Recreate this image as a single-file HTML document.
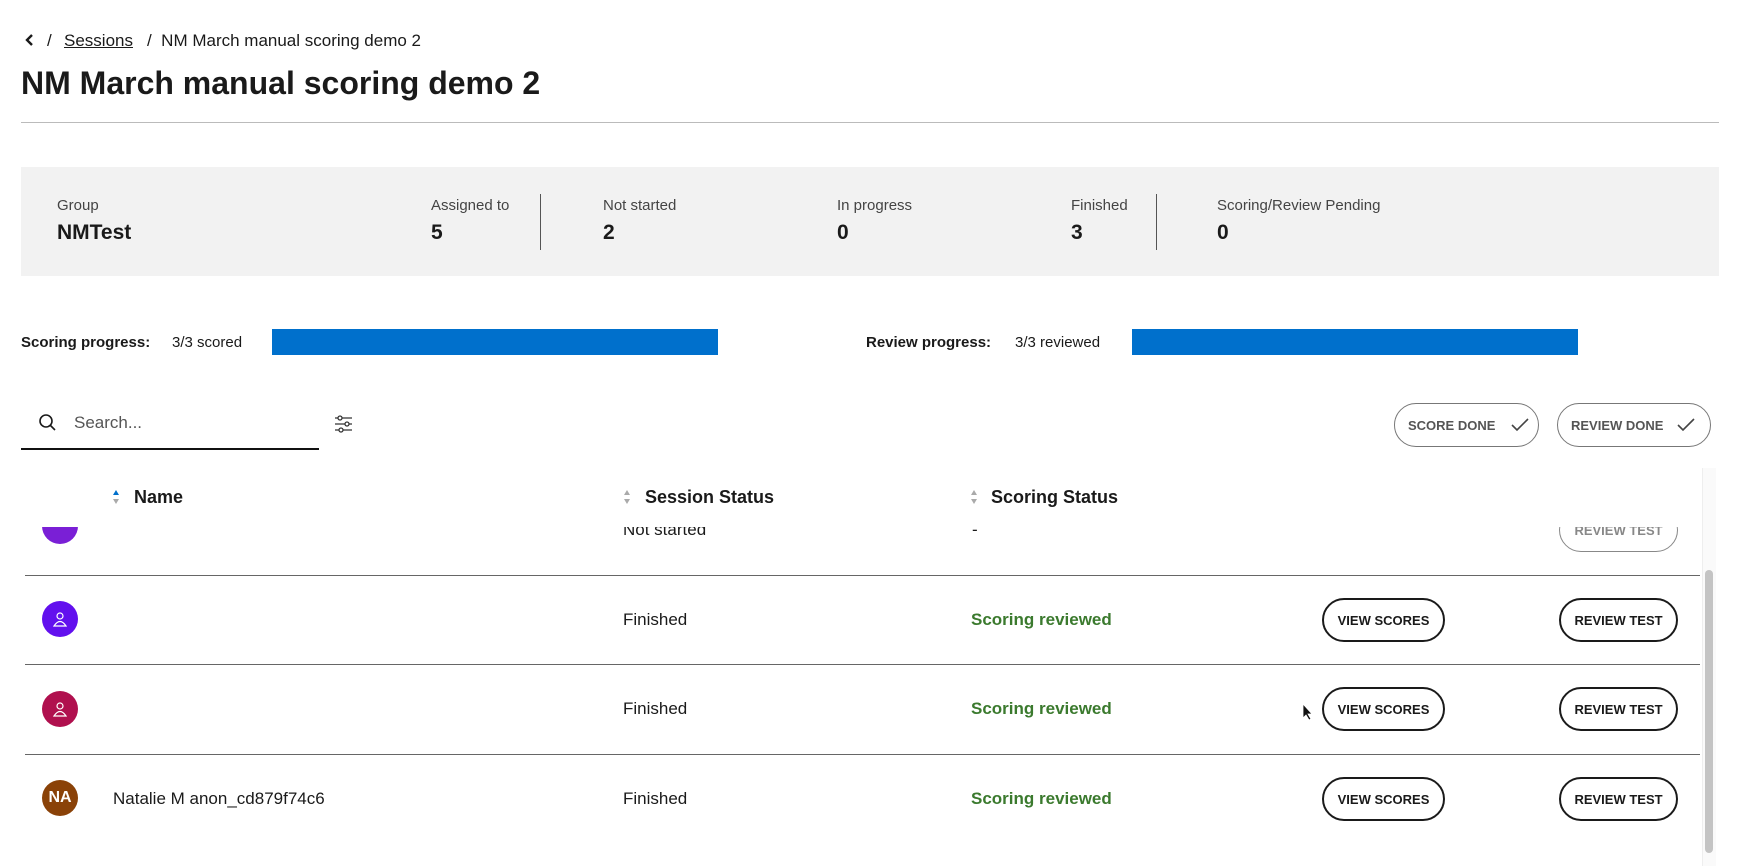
<!DOCTYPE html>
<html><head><meta charset="utf-8"><style>
*{margin:0;padding:0;box-sizing:border-box}
body{width:1752px;height:866px;overflow:hidden;background:#fff;font-family:"Liberation Sans",sans-serif;color:#1a1a1a;position:relative}
.a{position:absolute;white-space:nowrap}
.lbl{font-size:15px;color:#444;top:197px}
.val{font-size:21px;font-weight:bold;top:221px}
.btn{position:absolute;border:2px solid #1a1a1a;border-radius:22px;height:44px;font-size:13px;font-weight:bold;display:flex;align-items:center;justify-content:center;background:#fff}
.gbtn{position:absolute;border:1px solid #777;border-radius:24px;height:44px;top:403px;font-size:13px;font-weight:bold;color:#555;display:flex;align-items:center;padding-left:13px}
.line{position:absolute;left:25px;width:1675px;height:1px;background:#666}
.av{position:absolute;left:42px;width:36px;height:36px;border-radius:50%;display:flex;align-items:center;justify-content:center;color:#fff;font-weight:bold;font-size:16px}
.st{font-size:17px;left:623px}
.sr{font-size:17px;left:971px;color:#3b7a2e;font-weight:bold}
.sort{position:absolute;width:8px}
</style></head><body>
<svg class="a" style="left:24px;top:33px" width="12" height="14" viewBox="0 0 12 14"><path d="M8 2 L3 7 L8 12" stroke="#1a1a1a" stroke-width="2.4" fill="none"/></svg>
<div class="a" style="left:47px;top:31px;font-size:17px">/</div>
<div class="a" style="left:64px;top:31px;font-size:17px;text-decoration:underline">Sessions</div>
<div class="a" style="left:147px;top:31px;font-size:17px">/&nbsp;&nbsp;NM March manual scoring demo 2</div>
<div class="a" style="left:21px;top:65px;font-size:32px;font-weight:bold">NM March manual scoring demo 2</div>
<div class="a" style="left:21px;top:122px;width:1698px;height:1px;background:#bbb"></div>

<div class="a" style="left:21px;top:167px;width:1698px;height:109px;background:#f2f2f2"></div>
<div class="a lbl" style="left:57px">Group</div><div class="a val" style="left:57px">NMTest</div>
<div class="a lbl" style="left:431px">Assigned to</div><div class="a val" style="left:431px">5</div>
<div class="a" style="left:540px;top:194px;width:1px;height:56px;background:#555"></div>
<div class="a lbl" style="left:603px">Not started</div><div class="a val" style="left:603px">2</div>
<div class="a lbl" style="left:837px">In progress</div><div class="a val" style="left:837px">0</div>
<div class="a lbl" style="left:1071px">Finished</div><div class="a val" style="left:1071px">3</div>
<div class="a" style="left:1156px;top:194px;width:1px;height:56px;background:#555"></div>
<div class="a lbl" style="left:1217px">Scoring/Review Pending</div><div class="a val" style="left:1217px">0</div>

<div class="a" style="left:21px;top:334px;font-size:15px;font-weight:bold">Scoring progress:</div>
<div class="a" style="left:172px;top:334px;font-size:15px">3/3 scored</div>
<div class="a" style="left:272px;top:329px;width:446px;height:26px;background:#0070cc"></div>
<div class="a" style="left:866px;top:334px;font-size:15px;font-weight:bold">Review progress:</div>
<div class="a" style="left:1015px;top:334px;font-size:15px">3/3 reviewed</div>
<div class="a" style="left:1132px;top:329px;width:446px;height:26px;background:#0070cc"></div>

<svg class="a" style="left:38px;top:413px" width="20" height="20" viewBox="0 0 20 20"><circle cx="8" cy="8" r="6" stroke="#1a1a1a" stroke-width="1.6" fill="none"/><path d="M12.5 12.5 L17 17" stroke="#1a1a1a" stroke-width="1.6"/></svg>
<div class="a" style="left:74px;top:413px;font-size:17px;color:#555">Search...</div>
<div class="a" style="left:21px;top:448px;width:298px;height:2px;background:#111"></div>
<svg class="a" style="left:334px;top:414px" width="20" height="20" viewBox="0 0 20 20" fill="none" stroke="#333" stroke-width="1.3"><path d="M1 4H18M1 10H18M1 16H18"/><circle cx="6" cy="4" r="2" fill="#fff"/><circle cx="13" cy="10" r="2" fill="#fff"/><circle cx="7" cy="16" r="2" fill="#fff"/></svg>

<div class="gbtn" style="left:1394px;width:145px">SCORE DONE<svg style="margin-left:16px" width="18" height="14" viewBox="0 0 18 14"><path d="M1 7 L6 12 L17 1" stroke="#444" stroke-width="1.6" fill="none"/></svg></div>
<div class="gbtn" style="left:1557px;width:154px">REVIEW DONE<svg style="margin-left:14px" width="18" height="14" viewBox="0 0 18 14"><path d="M1 7 L6 12 L17 1" stroke="#444" stroke-width="1.6" fill="none"/></svg></div>

<!-- partial row -->
<div class="av" style="top:508px;background:#7a1fd6"></div>
<div class="a st" style="top:520px">Not started</div>
<div class="a" style="left:972px;top:520px;font-size:17px">-</div>
<div class="btn" style="left:1559px;top:508px;width:119px;border:1px solid #888;color:#888">REVIEW TEST</div>
<div class="a" style="left:0;top:468px;width:1700px;height:59px;background:#fff"></div>

<svg class="sort" style="left:112px;top:489px" width="8" height="16" viewBox="0 0 8 16"><path d="M4 1 L7 6 H1Z" fill="#0070cc"/><path d="M4 15 L7 10 H1Z" fill="#aaa"/></svg>
<div class="a" style="left:134px;top:487px;font-size:18px;font-weight:bold">Name</div>
<svg class="sort" style="left:623px;top:489px" width="8" height="16" viewBox="0 0 8 16"><path d="M4 1 L7 6 H1Z" fill="#aaa"/><path d="M4 15 L7 10 H1Z" fill="#aaa"/></svg>
<div class="a" style="left:645px;top:487px;font-size:18px;font-weight:bold">Session Status</div>
<svg class="sort" style="left:970px;top:489px" width="8" height="16" viewBox="0 0 8 16"><path d="M4 1 L7 6 H1Z" fill="#aaa"/><path d="M4 15 L7 10 H1Z" fill="#aaa"/></svg>
<div class="a" style="left:991px;top:487px;font-size:18px;font-weight:bold">Scoring Status</div>

<div class="line" style="top:575px"></div>
<div class="line" style="top:664px"></div>
<div class="line" style="top:754px"></div>

<div class="av" style="top:601px;background:#6210ee"><svg width="16" height="16" viewBox="0 0 16 16" fill="none" stroke="#fff" stroke-width="1.2"><circle cx="8" cy="5" r="3"/><path d="M2 15 Q8 6 14 15 Z"/></svg></div>
<div class="a st" style="top:610px">Finished</div>
<div class="a sr" style="top:610px">Scoring reviewed</div>
<div class="btn" style="left:1322px;top:598px;width:123px">VIEW SCORES</div>
<div class="btn" style="left:1559px;top:598px;width:119px">REVIEW TEST</div>

<div class="av" style="top:691px;background:#b0104e"><svg width="16" height="16" viewBox="0 0 16 16" fill="none" stroke="#fff" stroke-width="1.2"><circle cx="8" cy="5" r="3"/><path d="M2 15 Q8 6 14 15 Z"/></svg></div>
<div class="a st" style="top:699px">Finished</div>
<div class="a sr" style="top:699px">Scoring reviewed</div>
<div class="btn" style="left:1322px;top:687px;width:123px">VIEW SCORES</div>
<div class="btn" style="left:1559px;top:687px;width:119px">REVIEW TEST</div>
<svg class="a" style="left:1302px;top:703px" width="12" height="18" viewBox="0 0 12 18"><path d="M1 1 L1 15 L4 12 L7 17 L9 16 L6 11 L10 11 Z" fill="#111" stroke="#fff" stroke-width="0.8"/></svg>

<div class="av" style="top:780px;background:#8a4208">NA</div>
<div class="a" style="left:113px;top:789px;font-size:17px">Natalie M anon_cd879f74c6</div>
<div class="a st" style="top:789px">Finished</div>
<div class="a sr" style="top:789px">Scoring reviewed</div>
<div class="btn" style="left:1322px;top:777px;width:123px">VIEW SCORES</div>
<div class="btn" style="left:1559px;top:777px;width:119px">REVIEW TEST</div>

<div class="a" style="left:1702px;top:468px;width:14px;height:398px;border-left:1px solid #eee;background:#fafafa"></div>
<div class="a" style="left:1705px;top:570px;width:8px;height:283px;border-radius:4px;background:#c4c4c4"></div>
</body></html>
